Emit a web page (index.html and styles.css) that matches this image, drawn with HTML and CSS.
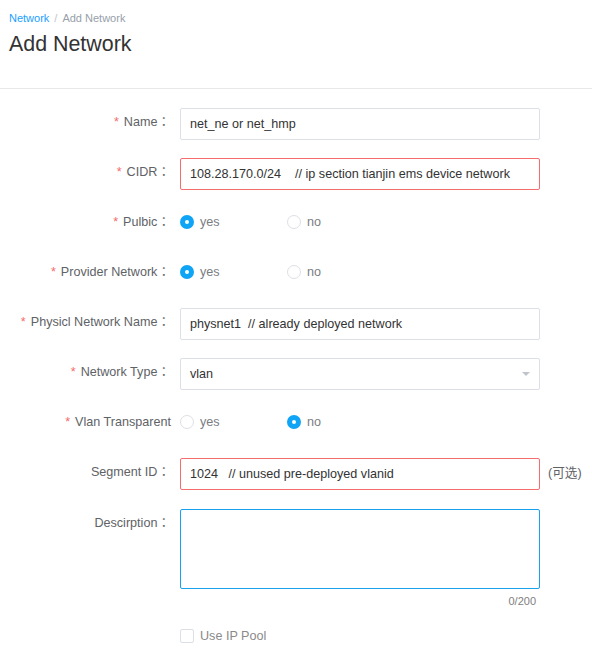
FILE: index.html
```html
<!DOCTYPE html>
<html>
<head>
<meta charset="utf-8">
<link rel="stylesheet" href="styles.css">
</head>
<body>
<div class="header">
  <div class="crumbs"><span class="crumb-link">Network</span><span class="crumb-sep">/</span><span class="crumb-cur">Add Network</span></div>
  <h1 class="title">Add Network</h1>
</div>
<form class="form">
  <div class="row">
    <label class="label"><span class="req">*</span>Name<span class="colon">：</span></label>
    <div class="field"><div class="input">net_ne or net_hmp</div></div>
  </div>
  <div class="row">
    <label class="label"><span class="req">*</span>CIDR<span class="colon">：</span></label>
    <div class="field"><div class="input error">108.28.170.0/24&nbsp;&nbsp;&nbsp;&nbsp;// ip section tianjin ems device network</div></div>
  </div>
  <div class="row">
    <label class="label"><span class="req">*</span>Pulbic<span class="colon">：</span></label>
    <div class="field radios">
      <span class="radio"><span class="dot on"></span><span class="rtext">yes</span></span>
      <span class="radio"><span class="dot"></span><span class="rtext">no</span></span>
    </div>
  </div>
  <div class="row">
    <label class="label"><span class="req">*</span>Provider Network<span class="colon">：</span></label>
    <div class="field radios">
      <span class="radio"><span class="dot on"></span><span class="rtext">yes</span></span>
      <span class="radio"><span class="dot"></span><span class="rtext">no</span></span>
    </div>
  </div>
  <div class="row">
    <label class="label"><span class="req">*</span>Physicl Network Name<span class="colon">：</span></label>
    <div class="field"><div class="input">physnet1&nbsp;&nbsp;// already deployed network</div></div>
  </div>
  <div class="row">
    <label class="label"><span class="req">*</span>Network Type<span class="colon">：</span></label>
    <div class="field"><div class="input select">vlan<span class="arrow"></span></div></div>
  </div>
  <div class="row">
    <label class="label nocolon"><span class="req">*</span>Vlan Transparent</label>
    <div class="field radios">
      <span class="radio"><span class="dot"></span><span class="rtext">yes</span></span>
      <span class="radio"><span class="dot on"></span><span class="rtext">no</span></span>
    </div>
  </div>
  <div class="row">
    <label class="label">Segment ID<span class="colon">：</span></label>
    <div class="field"><div class="input error">1024&nbsp;&nbsp;&nbsp;// unused pre-deployed vlanid</div></div>
    <span class="hint">(可选)</span>
  </div>
  <div class="row row-desc">
    <label class="label">Descirption<span class="colon">：</span></label>
    <div class="field">
      <div class="textarea"></div>
      <div class="count">0/200</div>
    </div>
  </div>
  <div class="row">
    <span class="label"></span>
    <div class="field checks">
      <span class="check"><span class="box"></span><span class="rtext">Use IP Pool</span></span>
    </div>
  </div>
</form>
</body>
</html>
```
FILE: styles.css
```css
html, body {
  margin: 0;
  padding: 0;
  background: #fff;
  font-family: "Liberation Sans", Arial, "Noto Sans CJK SC", sans-serif;
  color: #333;
}
.header {
  padding: 11px 9px 29px;
  border-bottom: 1px solid #e8e8e8;
}
.crumbs {
  font-size: 11px;
  line-height: 15px;
  height: 15px;
}
.crumb-link { color: #20a0ff; }
.crumb-sep { color: #c0c4cc; margin: 0 5px; }
.crumb-cur { color: #97a0aa; }
.title {
  margin: 3px 0 0;
  font-size: 21.4px;
  line-height: 30px;
  font-weight: normal;
  color: #333;
}
.form {
  padding-top: 19px;
}
.row {
  display: flex;
  align-items: flex-start;
  height: 32px;
  margin-bottom: 18px;
}
.label {
  width: 170px;
  height: 32px;
  padding-right: 10px;
  flex: none;
  text-align: right;
  font-size: 12.6px;
  line-height: 29px;
  color: #606266;
  white-space: nowrap;
}
.label.nocolon { padding-right: 9px; width: 171px; }
.req {
  color: #f56c6c;
  margin-right: 5px;
}
.colon {
  font-family: "Noto Sans CJK JP", sans-serif;
  font-size: 12.6px;
  line-height: 1;
}
.field {
  width: 360px;
  flex: none;
}
.input {
  box-sizing: border-box;
  height: 32px;
  border: 1px solid #dcdfe6;
  border-radius: 2px;
  padding: 0 9px;
  font-size: 12.6px;
  line-height: 30px;
  color: #333;
  white-space: nowrap;
  position: relative;
}
.input.error { border-color: #f56c6c; }
.select .arrow {
  position: absolute;
  right: 9px;
  top: 13px;
  width: 0;
  height: 0;
  border-left: 4px solid transparent;
  border-right: 4px solid transparent;
  border-top: 4px solid #c0c4cc;
}
.radios {
  display: flex;
  align-items: center;
  height: 28px;
}
.checks {
  display: flex;
  align-items: center;
  height: 32px;
}
.radio {
  width: 107px;
  display: flex;
  align-items: center;
  font-size: 12.6px;
  color: #7a7d82;
}
.dot {
  box-sizing: border-box;
  width: 14px;
  height: 14px;
  border-radius: 50%;
  border: 1px solid #dcdfe6;
  background: #fff;
  flex: none;
}
.dot.on {
  border: 5px solid #0fa4f5;
  background: #fff;
}
.rtext {
  margin-left: 6px;
}
.hint {
  margin-left: 8px;
  font-size: 12.6px;
  line-height: 30px;
  color: #606266;
  font-family: "Liberation Sans", "Noto Sans CJK SC", sans-serif;
}
.row-desc {
  height: auto;
  padding-top: 1px;
  margin-bottom: 9px;
}
.row-desc .label { line-height: 28px; height: 30px; }
.textarea {
  box-sizing: border-box;
  height: 80px;
  border: 1px solid #17a1ee;
  border-radius: 2px;
}
.count {
  text-align: right;
  padding-right: 4px;
  margin-top: 2px;
  font-size: 11px;
  line-height: 20px;
  color: #808080;
}
.check {
  display: flex;
  align-items: center;
  font-size: 12.6px;
  color: #8a8a8a;
}
.box {
  box-sizing: border-box;
  width: 14px;
  height: 14px;
  border: 1px solid #dcdfe6;
  border-radius: 2px;
  flex: none;
}
```
